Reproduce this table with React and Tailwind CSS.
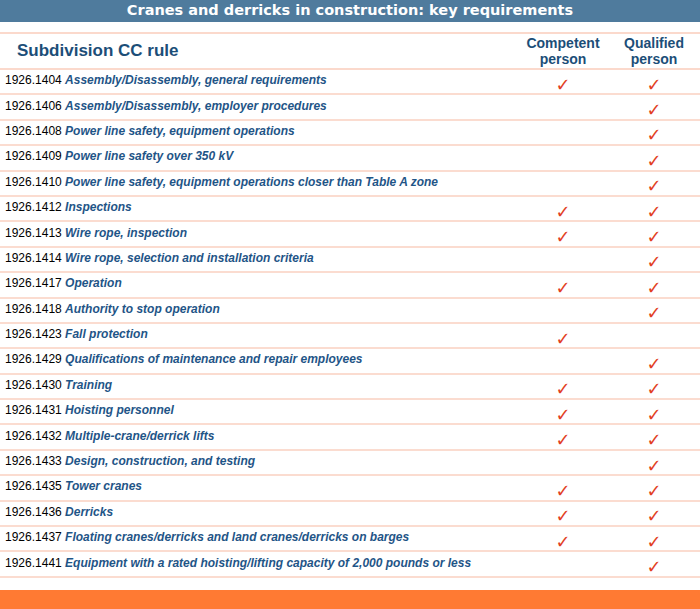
const rules = [
  ["1926.1404", "Assembly/Disassembly, general requirements", true, true],
  ["1926.1406", "Assembly/Disassembly, employer procedures", false, true],
  ["1926.1408", "Power line safety, equipment operations", false, true],
  ["1926.1409", "Power line safety over 350 kV", false, true],
  ["1926.1410", "Power line safety, equipment operations closer than Table A zone", false, true],
  ["1926.1412", "Inspections", true, true],
  ["1926.1413", "Wire rope, inspection", true, true],
  ["1926.1414", "Wire rope, selection and installation criteria", false, true],
  ["1926.1417", "Operation", true, true],
  ["1926.1418", "Authority to stop operation", false, true],
  ["1926.1423", "Fall protection", true, false],
  ["1926.1429", "Qualifications of maintenance and repair employees", false, true],
  ["1926.1430", "Training", true, true],
  ["1926.1431", "Hoisting personnel", true, true],
  ["1926.1432", "Multiple-crane/derrick lifts", true, true],
  ["1926.1433", "Design, construction, and testing", false, true],
  ["1926.1435", "Tower cranes", true, true],
  ["1926.1436", "Derricks", true, true],
  ["1926.1437", "Floating cranes/derricks and land cranes/derricks on barges", true, true],
  ["1926.1441", "Equipment with a rated hoisting/lifting capacity of 2,000 pounds or less", false, true],
];

function Check() {
  return (
    <span className="text-[#e2401f] text-[18px] leading-none font-['DejaVu_Sans',sans-serif]">
      ✓
    </span>
  );
}

export default function App() {
  return (
    <div className="w-[700px] h-[609px] bg-white flex flex-col font-['Liberation_Sans',Arial,sans-serif] overflow-hidden">

      {/* Title */}
      <div className="h-[22px] bg-[#4f7b9d] flex items-center justify-center">
        <h1 className="text-white font-bold text-[14.5px] font-['DejaVu_Sans',sans-serif]">
          Cranes and derricks in construction: key requirements
        </h1>
      </div>

      <div className="h-[10px]" />

      {/* Header */}
      <div className="h-[38px] border-t-2 border-b-2 border-[#fbd9cc] flex items-center">
        <div className="flex-1 pl-[17px] text-[17px] font-bold text-[#1c4e78]">
          Subdivision CC rule
        </div>
        <div className="w-[90px] text-center text-[14px] font-bold leading-[16px] text-[#1c4e78]">
          Competent<br />person
        </div>
        <div className="w-[92px] text-center text-[14px] font-bold leading-[16px] text-[#1c4e78]">
          Qualified<br />person
        </div>
      </div>

      {/* Rows */}
      {rules.map(([num, name, comp, qual]) => (
        <div
          key={num}
          className="h-[25.4px] border-b-2 border-[#fbdcd0] flex items-center text-[12px]"
        >
          <div className="flex-1 pl-[5px] -mt-[3px]">
            <span className="text-black">{num} </span>
            <span className="font-bold italic text-[#1f5587]">{name}</span>
          </div>
          <div className="w-[90px] flex justify-center pt-[6px]">
            {comp && <Check />}
          </div>
          <div className="w-[92px] flex justify-center pt-[6px]">
            {qual && <Check />}
          </div>
        </div>
      ))}

      <div className="h-[12px]" />

      {/* Footer bar */}
      <div className="flex-1 bg-[#ff7a33]" />

    </div>
  );
}
